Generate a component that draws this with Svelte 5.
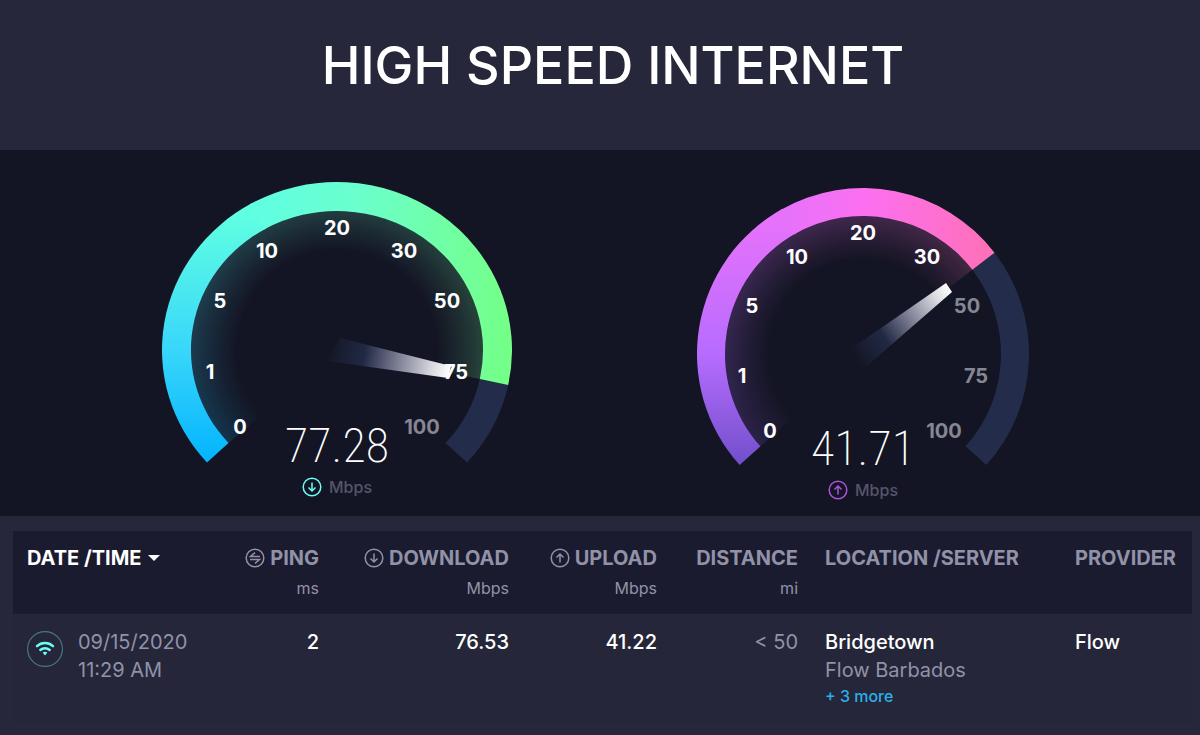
<script lang="ts">
  interface Gauge {
    id: string;
    value: string;
    cy: number;
    rx: number;
    ry: number;
    thickness: number;
    angle: number;
    height: number;
    vertical: string[];
    horizontal: string[];
    needle: string;
    tip: number[];
    labels: { text: string; x: number; y: number; off?: boolean }[];
    icon: string;
    arrow: string;
  }

  const CX = 175;
  const START = 138;
  const SPLIT = 240;
  const END = 402;

  const gauges: Gauge[] = [
    {
      id: "download",
      value: "77.28",
      cy: 180,
      rx: 175,
      ry: 168,
      thickness: 29,
      angle: 372,
      height: 307,
      vertical: ["#04b4ff", "#38d6fa", "#60ffe2"],
      horizontal: ["#60ffe2", "#6affcc", "#74ff88"],
      needle: "178,168 289,196 286,208 165,191",
      tip: [288, 202],
      labels: [
        { text: "0", x: 78, y: 257 },
        { text: "1", x: 48, y: 202 },
        { text: "5", x: 58, y: 131 },
        { text: "10", x: 105, y: 81 },
        { text: "20", x: 175, y: 58 },
        { text: "30", x: 242, y: 81 },
        { text: "50", x: 285, y: 131 },
        { text: "75", x: 294, y: 202 },
        { text: "100", x: 260, y: 257, off: true },
      ],
      icon: "#6afff3",
      arrow: "M10 5.5v8.5M6.5 10.5L10 14l3.5-3.5",
    },
    {
      id: "upload",
      value: "41.71",
      cy: 184,
      rx: 166,
      ry: 166,
      thickness: 28,
      angle: 322.4,
      height: 310,
      vertical: ["#7350cc", "#b76cff", "#e672fb"],
      horizontal: ["#e672fb", "#fc70f0", "#ff70b8"],
      needle: "157,183 258,113 264,122 172,202",
      tip: [261, 118],
      labels: [
        { text: "0", x: 82, y: 261 },
        { text: "1", x: 54, y: 206 },
        { text: "5", x: 64, y: 136 },
        { text: "10", x: 109, y: 87 },
        { text: "20", x: 175, y: 63 },
        { text: "30", x: 239, y: 87 },
        { text: "50", x: 279, y: 136, off: true },
        { text: "75", x: 288, y: 206, off: true },
        { text: "100", x: 256, y: 261, off: true },
      ],
      icon: "#a855d8",
      arrow: "M10 14.5V6M6.5 9.5L10 6l3.5 3.5",
    },
  ];

  function point(g: Gauge, inset: number, deg: number) {
    const a = (deg * Math.PI) / 180;
    return `${CX + (g.rx - inset) * Math.cos(a)} ${g.cy + (g.ry - inset) * Math.sin(a)}`;
  }

  // a piece of the dial ring between two angles
  function ring(g: Gauge, from: number, to: number) {
    const t = g.thickness;
    const big = to - from > 180 ? 1 : 0;
    return `M${point(g, 0, from)} A${g.rx} ${g.ry} 0 ${big} 1 ${point(g, 0, to)} L${point(g, t, to)} A${g.rx - t} ${g.ry - t} 0 ${big} 0 ${point(g, t, from)}Z`;
  }

  // the slice inside the ring, used for the glow
  function wedge(g: Gauge, from: number, to: number) {
    const t = g.thickness;
    return `M${CX} ${g.cy} L${point(g, t, from)} A${g.rx - t} ${g.ry - t} 0 0 1 ${point(g, t, to)}Z`;
  }
</script>

{#snippet headIcon(d: string)}
  <svg class="head-icon" viewBox="0 0 20 20" aria-hidden="true">
    <circle cx="10" cy="10" r="8.8" />
    <path {d} />
  </svg>
{/snippet}

<div class="page">
  <header>
    <h1>HIGH SPEED INTERNET</h1>
  </header>

  <section class="gauges">
    {#each gauges as g}
      <figure>
        <svg class="dial" viewBox="0 0 350 {g.height}" role="img" aria-label="{g.id} speed">
          <defs>
            <linearGradient id="{g.id}-v" gradientUnits="userSpaceOnUse" x1="0" y1="292" x2="0" y2={g.cy - g.ry * 0.8}>
              <stop offset="0" stop-color={g.vertical[0]} />
              <stop offset="0.45" stop-color={g.vertical[1]} />
              <stop offset="1" stop-color={g.vertical[2]} />
            </linearGradient>
            <linearGradient id="{g.id}-h" gradientUnits="userSpaceOnUse" x1="98" y1="0" x2={g.id === "upload" ? 300 : 345} y2="0">
              <stop offset="0" stop-color={g.horizontal[0]} />
              <stop offset="0.4" stop-color={g.horizontal[1]} />
              <stop offset="1" stop-color={g.horizontal[2]} />
            </linearGradient>
            <radialGradient id="{g.id}-fade" gradientUnits="userSpaceOnUse" cx={CX} cy={g.cy} r={g.rx - g.thickness}>
              <stop offset="0.68" stop-color="#fff" stop-opacity="0" />
              <stop offset="0.82" stop-color="#fff" stop-opacity="0.08" />
              <stop offset="1" stop-color="#fff" stop-opacity="0.2" />
            </radialGradient>
            <mask id="{g.id}-mask" maskUnits="userSpaceOnUse" x="0" y="0" width="350" height="310">
              <rect width="350" height="310" fill="url(#{g.id}-fade)" />
            </mask>
            <linearGradient id="{g.id}-needle" gradientUnits="userSpaceOnUse" x1={CX - 10} y1={g.cy} x2={g.tip[0]} y2={g.tip[1]}>
              <stop offset="0" stop-color="#232d4b" stop-opacity="0" />
              <stop offset="0.3" stop-color="#202843" />
              <stop offset="0.6" stop-color="#85869b" />
              <stop offset="0.85" stop-color="#d8d8de" />
              <stop offset="1" stop-color="#fff" />
            </linearGradient>
          </defs>

          <g mask="url(#{g.id}-mask)">
            <path d={wedge(g, START, SPLIT)} fill="url(#{g.id}-v)" />
            <path d={wedge(g, SPLIT, g.angle)} fill="url(#{g.id}-h)" />
          </g>
          <path d={ring(g, g.angle, END)} fill="#232d4b" />
          <path d={ring(g, START, SPLIT + 1)} fill="url(#{g.id}-v)" />
          <path d={ring(g, SPLIT, g.angle)} fill="url(#{g.id}-h)" />

          {#each g.labels as label}
            <text class="tick" class:off={label.off} x={label.x} y={label.y + 7}>{label.text}</text>
          {/each}
          <polygon points={g.needle} fill="url(#{g.id}-needle)" />
          <text class="value" x={CX} y={g.height - 15}>{g.value}</text>
        </svg>
        <figcaption>
          <svg viewBox="0 0 20 20" aria-hidden="true" stroke={g.icon}>
            <circle cx="10" cy="10" r="8.8" />
            <path d={g.arrow} />
          </svg>
          Mbps
        </figcaption>
      </figure>
    {/each}
  </section>

  <section class="results">
    <table>
      <colgroup>
        <col style="width: 202px" />
        <col style="width: 104px" />
        <col style="width: 190px" />
        <col style="width: 148px" />
        <col style="width: 141px" />
        <col style="width: 250px" />
        <col style="width: 144px" />
      </colgroup>
      <thead>
        <tr>
          <th class="date">
            <button>
              DATE /TIME
              <svg class="caret" viewBox="0 0 12 6" aria-hidden="true"><path d="M0 0h12L6 6z" /></svg>
            </button>
          </th>
          <th class="num">
            <div class="head">{@render headIcon("M15 8.4H5.5L10 4.6M5 11.6h9.5L10 15.4")} PING</div>
            <div class="unit">ms</div>
          </th>
          <th class="num">
            <div class="head">{@render headIcon("M10 5.5v8.5M6.5 10.5L10 14l3.5-3.5")} DOWNLOAD</div>
            <div class="unit">Mbps</div>
          </th>
          <th class="num">
            <div class="head">{@render headIcon("M10 14.5V6M6.5 9.5L10 6l3.5 3.5")} UPLOAD</div>
            <div class="unit">Mbps</div>
          </th>
          <th class="num">
            <div class="head">DISTANCE</div>
            <div class="unit">mi</div>
          </th>
          <th>LOCATION /SERVER</th>
          <th>PROVIDER</th>
        </tr>
      </thead>
      <tbody>
        <tr>
          <td class="date">
            <div class="when">
              <svg class="wifi" viewBox="0 0 36 36" aria-hidden="true">
                <circle class="edge" cx="18" cy="18" r="17.4" />
                <path d="M10 15.2a11.8 11.8 0 0 1 16 0M13.3 19a7 7 0 0 1 9.4 0" />
                <path class="dot" d="M15.6 21.6q2.4-1.6 4.8 0L18 24.6z" />
              </svg>
              <div>09/15/2020<br />11:29 AM</div>
            </div>
          </td>
          <td class="num bright">2</td>
          <td class="num bright">76.53</td>
          <td class="num bright">41.22</td>
          <td class="num">&lt; 50</td>
          <td>
            <div class="bright">Bridgetown</div>
            <div>Flow Barbados</div>
            <a href="#more">+ 3 more</a>
          </td>
          <td class="bright">Flow</td>
        </tr>
      </tbody>
    </table>
  </section>
</div>

<style>
  :global(body) {
    margin: 0;
    background: #27273c;
  }
  .page {
    font-family: Inter, "Open Sans", sans-serif;
    color: #9192a8;
  }
  header {
    padding: 31px 0 49px 26px;
    background: #27273b;
    text-align: center;
  }
  h1 {
    margin: 0;
    color: #fff;
    font-size: 52px;
    font-weight: 500;
    line-height: 70px;
  }

  .gauges {
    display: flex;
    justify-content: center;
    gap: 176px;
    padding: 20px 0 16px;
    background: #141524;
  }
  figure {
    width: 350px;
    margin: 0;
  }
  .dial {
    display: block;
    width: 100%;
  }
  .tick {
    fill: #fff;
    font-size: 20px;
    font-weight: 700;
    text-anchor: middle;
  }
  .tick.off {
    fill: #868793;
  }
  .value {
    fill: #fff;
    font-family: "Roboto Condensed", Roboto, sans-serif;
    font-size: 48px;
    font-weight: 200;
    text-anchor: middle;
  }
  figcaption {
    display: flex;
    align-items: center;
    justify-content: center;
    gap: 7px;
    color: #55566a;
    font-size: 16px;
    font-weight: 500;
    line-height: 20px;
  }
  figcaption svg,
  .head-icon {
    width: 20px;
    height: 20px;
    fill: none;
    stroke-width: 1.5;
  }

  .results {
    padding: 15px 8px 12px 13px;
  }
  table {
    width: 100%;
    table-layout: fixed;
    border-collapse: collapse;
    background: #252639;
    font-size: 20px;
  }
  thead {
    background: #1b1b2f;
  }
  th {
    padding: 12px 0 11px 27px;
    font-weight: 700;
    line-height: 30px;
    text-align: left;
    vertical-align: top;
    white-space: nowrap;
  }
  td {
    padding: 14px 0 15px 27px;
    line-height: 28px;
    vertical-align: top;
  }
  .date {
    padding-left: 14px;
  }
  .num {
    padding-left: 0;
    text-align: right;
  }
  th button {
    display: flex;
    align-items: center;
    gap: 6px;
    padding: 0;
    border: 0;
    background: none;
    color: #fff;
    font: inherit;
    cursor: pointer;
  }
  .caret {
    width: 12px;
    height: 6px;
    fill: #fff;
  }
  .head {
    display: flex;
    align-items: center;
    justify-content: flex-end;
    gap: 5px;
  }
  .head-icon {
    stroke: #9192a8;
  }
  .unit {
    font-size: 16px;
    font-weight: 400;
  }
  .bright {
    color: #fff;
    font-weight: 500;
  }
  .when {
    display: flex;
    gap: 15px;
  }
  .wifi {
    width: 36px;
    height: 36px;
    margin-top: 3px;
    fill: none;
    stroke: #6afff3;
    stroke-width: 2.4;
    stroke-linecap: round;
  }
  .wifi .edge {
    stroke: #467680;
    stroke-width: 1.2;
  }
  .wifi .dot {
    fill: #6afff3;
    stroke: none;
  }
  a {
    display: block;
    color: #29b1ea;
    font-size: 16px;
    font-weight: 500;
    line-height: 24px;
    text-decoration: none;
  }
</style>
